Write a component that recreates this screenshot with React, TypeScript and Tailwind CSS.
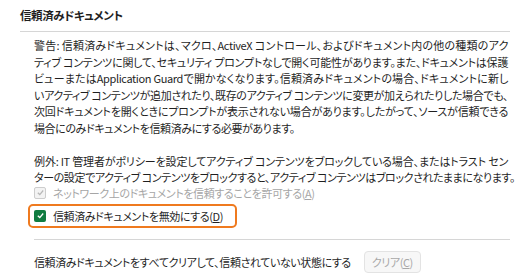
import React from "react";

const font = { fontFamily: '"Noto Sans CJK JP", "Noto Sans", sans-serif' };

function Check({ disabled }: { disabled?: boolean }) {
  if (disabled) {
    return (
      <span className="flex h-[12px] w-[12px] shrink-0 items-center justify-center rounded-[2px] border border-[#cdcdcd] bg-[#f3f3f3]">
        <svg width="9" height="9" viewBox="0 0 10 10">
          <path d="M2 5.2 L4.2 7.3 L8 2.8" fill="none" stroke="#b8b8b8" strokeWidth="1.4" />
        </svg>
      </span>
    );
  }
  return (
    <span className="flex h-[12px] w-[12px] shrink-0 items-center justify-center rounded-[2px] bg-[#107c41]">
      <svg width="9" height="9" viewBox="0 0 10 10">
        <path d="M2 5.2 L4.2 7.3 L8 2.8" fill="none" stroke="#ffffff" strokeWidth="1.5" />
      </svg>
    </span>
  );
}

function Line({ text, full }: { text: string; full?: boolean }) {
  return full ? (
    <div className="w-[474px] whitespace-nowrap text-justify [text-align-last:justify]">{text}</div>
  ) : (
    <div className="whitespace-nowrap">{text}</div>
  );
}

export default function App() {
  const p1 = [
    "警告: 信頼済みドキュメントは、マクロ、ActiveX コントロール、およびドキュメント内の他の種類のアク",
    "ティブ コンテンツに関して、セキュリティ プロンプトなしで開く可能性があります。また、ドキュメントは保護",
    "ビューまたはApplication Guardで開かなくなります。信頼済みドキュメントの場合、ドキュメントに新し",
    "いアクティブ コンテンツが追加されたり、既存のアクティブ コンテンツに変更が加えられたりした場合でも、",
    "次回ドキュメントを開くときにプロンプトが表示されない場合があります。したがって、ソースが信頼できる",
  ];
  const p2 = [
    "例外: IT 管理者がポリシーを設定してアクティブ コンテンツをブロックしている場合、またはトラスト セン",
    "ターの設定でアクティブ コンテンツをブロックすると、アクティブ コンテンツはブロックされたままになります。",
  ];
  return (
    <div
      className="h-[278px] w-[520px] overflow-hidden bg-white text-[11px] tracking-[-0.4px] text-[#1f1f1f] [font-feature-settings:'palt']"
      style={font}
    >
      <div className="pl-[20px] pr-[10px] pt-[6px]">
        <div className="h-[19px] text-[11.5px] font-semibold leading-[19px]">信頼済みドキュメント</div>
        <div className="mt-[6px] h-px bg-[#d6d6d6]" />
      </div>
      <div className="pl-[34px] pr-[10px]">
        <div className="mt-[5px] leading-[16.6px]">
          {p1.map((l) => (
            <Line key={l} text={l} full />
          ))}
          <Line text="場合にのみドキュメントを信頼済みにする必要があります。" />
        </div>
        <div className="mt-[16px] leading-[16.6px]">
          <Line text={p2[0]} full />
          <div className="w-[470px] whitespace-nowrap text-justify [text-align-last:justify]">{p2[1]}</div>
        </div>
        <div className="mt-[-1px] flex h-[16px] items-center gap-[7px] text-[#a6a6a6]">
          <Check disabled />
          <span className="whitespace-nowrap">
            ネットワーク上のドキュメントを信頼することを許可する(<span className="underline">A</span>)
          </span>
        </div>
        <div className="-ml-[6px] mt-[3px] flex h-[24px] w-[209px] items-center gap-[7px] rounded-[5px] border-2 border-[#ef7a1f] pl-[4px]">
          <Check />
          <span className="whitespace-nowrap">
            信頼済みドキュメントを無効にする(<span className="underline">D</span>)
          </span>
        </div>
        <div className="mt-[11px] h-px bg-[#d6d6d6]" />
        <div className="mt-[11px] flex items-center gap-[13px]">
          <span className="whitespace-nowrap">信頼済みドキュメントをすべてクリアして、信頼されていない状態にする</span>
          <button
            disabled
            className="flex h-[22px] w-[57px] items-center justify-center rounded-[4px] border border-[#e3e3e3] bg-[#f7f7f7] text-[11px] text-[#a8a8a8]"
          >
            クリア(<span className="underline">C</span>)
          </button>
        </div>
      </div>
    </div>
  );
}
